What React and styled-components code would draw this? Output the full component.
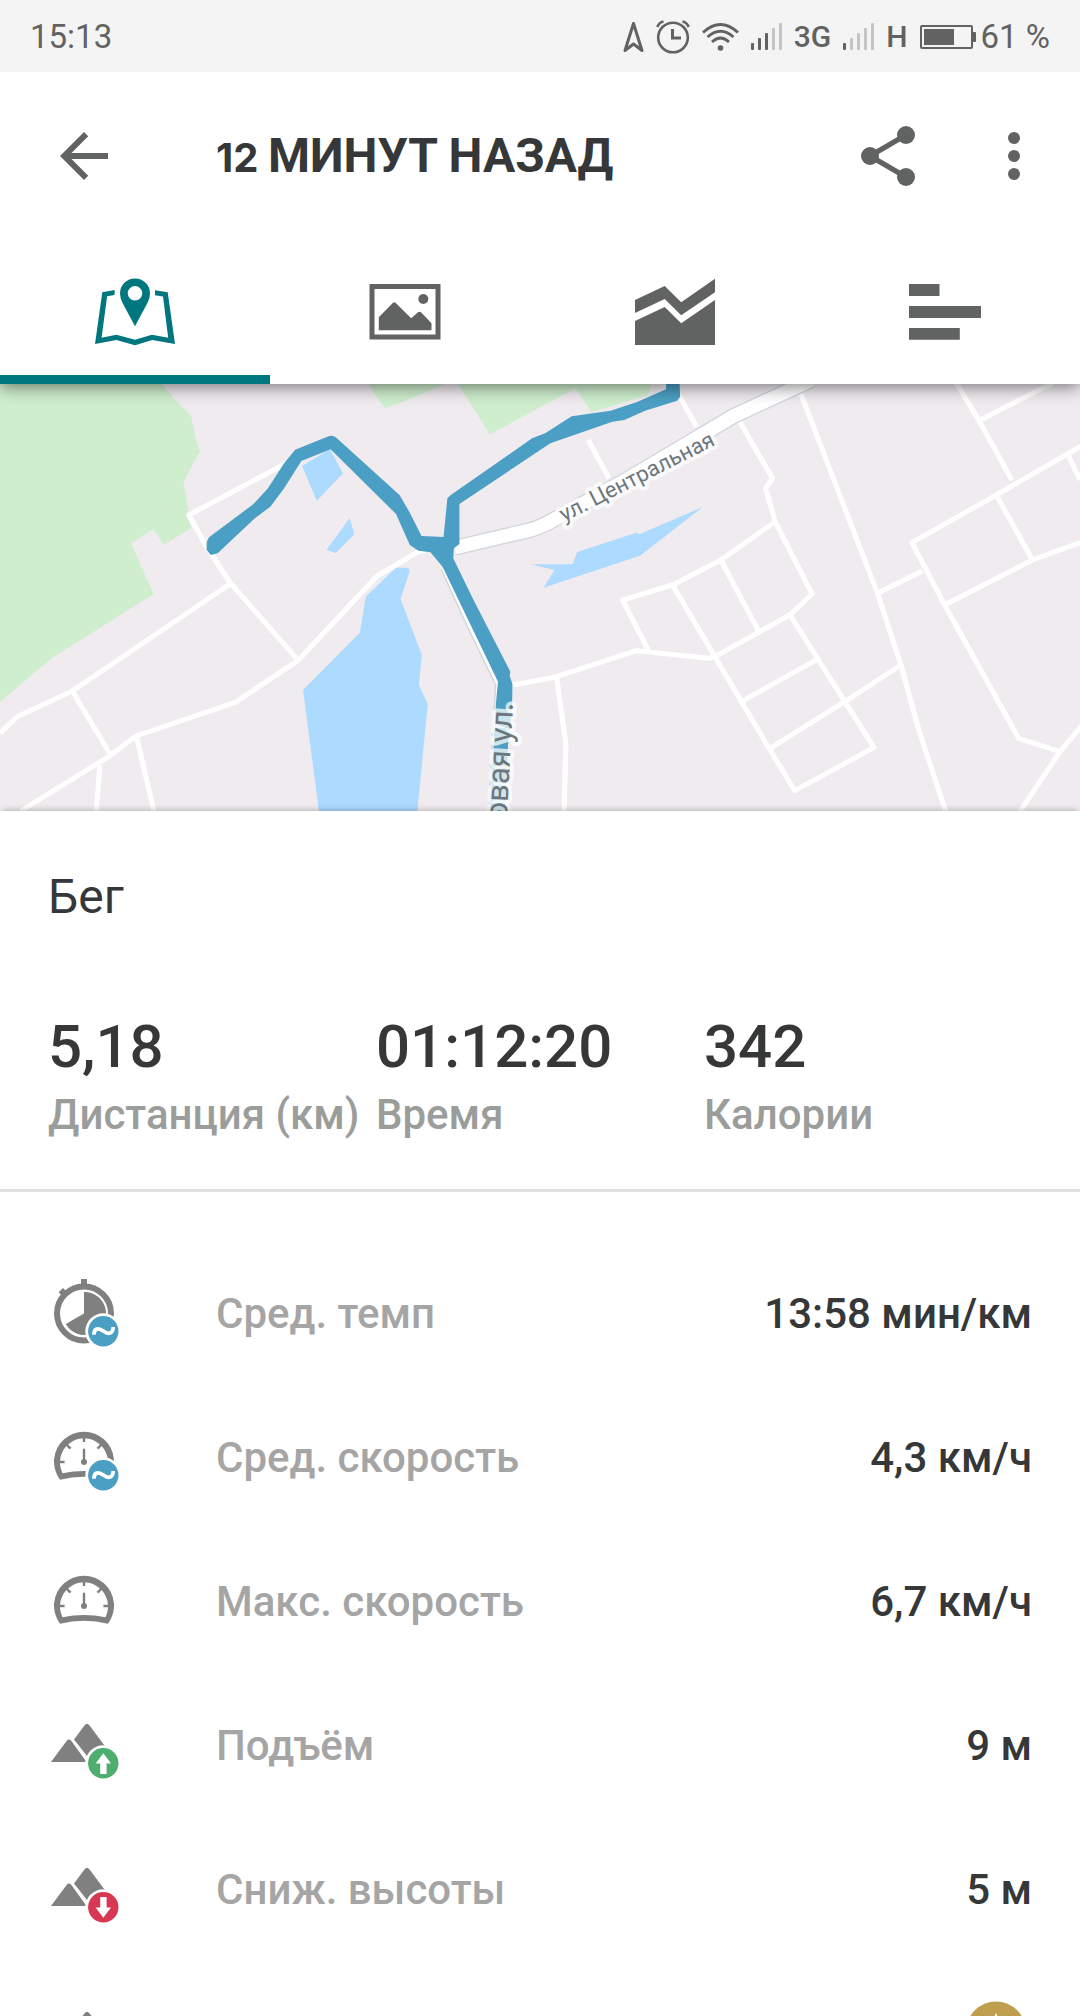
import React from "react";
import styled, { createGlobalStyle } from "styled-components";

const GlobalStyle = createGlobalStyle`
  * { box-sizing: border-box; }
  body {
    margin: 0;
    background: #fff;
    color: #363738;
    font-family: Roboto, "Noto Sans", sans-serif;
  }
`;

const Screen = styled.div`
  height: 100vh;
  overflow: hidden;
  background: #fff;
`;

const StatusBar = styled.div`
  position: relative;
  z-index: 2;
  display: flex;
  align-items: center;
  justify-content: space-between;
  height: 72px;
  padding: 1px 30px 0;
  background: #f4f4f4;
  color: #626262;
  font-size: 33px;
  line-height: 40px;
`;

const StatusIcons = styled.div`
  display: flex;
  align-items: center;
  gap: 12px;
`;

const BatteryLevel = styled.div`
  display: flex;
  align-items: center;
  gap: 5px;
`;

const NetworkType = styled.span`
  font-size: 30px;
  font-weight: 500;
`;

const Icon = styled.svg`
  display: block;
  flex: none;
  fill: currentColor;
`;

const Header = styled.header`
  position: relative;
  z-index: 1;
  background: #fff;
  box-shadow: 0 3px 16px rgba(0, 0, 0, 0.5);
`;

const AppBar = styled.div`
  display: flex;
  align-items: center;
  height: 168px;
  padding: 0 30px 0 48px;
`;

const IconButton = styled.button`
  display: block;
  flex: none;
  padding: 0;
  border: 0;
  background: none;
  color: #616362;
  cursor: pointer;
`;

const Title = styled.h1`
  flex: 1;
  margin: 0 0 0 96px;
  padding-top: 2px;
  font-size: 48px;
  line-height: 56px;
  font-weight: 700;
  white-space: nowrap;
`;

const TitleNumber = styled.span`
  font-family: Inter, Roboto, sans-serif;
  font-size: 40px;
`;

const Actions = styled.div`
  display: flex;
  gap: 54px;
`;

const Tabs = styled.nav`
  display: grid;
  grid-template-columns: repeat(4, 1fr);
  height: 144px;
`;

const Tab = styled.button`
  display: flex;
  align-items: center;
  justify-content: center;
  padding: 9px 0 0;
  border: 0;
  border-bottom: 9px solid ${(p) => (p.$active ? "#00767f" : "transparent")};
  background: none;
  color: ${(p) => (p.$active ? "#00767f" : "#616362")};
  cursor: pointer;
`;

const MapArea = styled.svg`
  display: block;
  width: 100%;
  height: 427px;
  background: #efebef;
`;

const StreetName = styled.text`
  font-size: ${(p) => p.$size}px;
  fill: #6c777d;
  stroke: rgba(255, 255, 255, 0.72);
  stroke-width: 8px;
  stroke-linejoin: round;
  paint-order: stroke;
`;

const Summary = styled.section`
  position: relative;
  padding: 58px 48px 49px;
  border-bottom: 3px solid #e0e0e0;
  background: #fff;
  box-shadow: 0 -4px 6px -3px rgba(0, 0, 0, 0.25);
`;

const Activity = styled.h2`
  margin: 0 0 86px;
  font-size: 48px;
  line-height: 56px;
  font-weight: 400;
`;

const Stats = styled.dl`
  display: grid;
  grid-template-columns: repeat(3, 1fr);
  margin: 0;
`;

const Stat = styled.div`
  display: flex;
  flex-direction: column-reverse;
  gap: 7px;
`;

const StatValue = styled.dd`
  margin: 0;
  font-size: 60px;
  line-height: 72px;
  font-weight: 500;
`;

const StatLabel = styled.dt`
  color: #9b9d9b;
  font-size: 42px;
  line-height: 50px;
  font-weight: 500;
  white-space: nowrap;
`;

const Details = styled.dl`
  margin: 0;
  padding: 50px 48px 0;
`;

const Row = styled.div`
  display: flex;
  align-items: center;
  height: 144px;
  font-size: 42px;
  line-height: 50px;
  font-weight: 500;
`;

const RowLabel = styled.dt`
  display: flex;
  flex: 1;
  align-items: center;
  gap: 96px;
  color: #a5a5a5;
`;

const RowValue = styled.dd`
  margin: 0;
`;

const RowIcon = styled(Icon)`
  color: #808080;
`;

function Signal({ level }) {
  const tops = [20, 15, 10, 5, 0];
  return (
    <Icon width="31" height="27" aria-hidden="true">
      {tops.map((top, i) => (
        <rect key={top} x={i * 7} y={top} width="3" height={27 - top} rx="1" fill={i < level ? "#626262" : "#c4c4c4"} />
      ))}
    </Icon>
  );
}

function Badge({ kind }) {
  const colors = { average: "#4c9fc4", up: "#4fad6d", down: "#d73753" };
  return (
    <g>
      <circle cx="55.3" cy="53.3" r="18" fill="#fff" />
      <circle cx="55.3" cy="53.3" r="15.2" fill={colors[kind]} />
      {kind === "average" && (
        <path d="M45.9 56.8C46 50.5 50 49.2 55.3 53S64.8 56 65.2 49" fill="none" stroke="#fff" strokeWidth="3.8" />
      )}
      {kind === "up" && <path d="M55.3 43.2L63 53.4H58.6V64H52.2V53.4H47.6Z" fill="#fff" />}
      {kind === "down" && <path d="M55.3 63.8L47.6 53.6H52.2V43H58.6V53.6H63Z" fill="#fff" />}
    </g>
  );
}

function Stopwatch() {
  return (
    <g>
      <circle cx="36" cy="35.5" r="27" fill="none" stroke="currentColor" strokeWidth="6" />
      <path d="M33 1h6v7h-6zM10.6 14.3L15 10l3.6 3.6-4.4 4.4z" />
      <path d="M36 35.5V14A21.5 21.5 0 1 1 17.8 46Z" />
    </g>
  );
}

function Gauge() {
  return (
    <g>
      <path
        fillRule="evenodd"
        d="M12 57.7A30 30 0 1 1 60 57.7Q36 52 12 57.7ZM14.6 51.2A24 24 0 1 1 57.4 51.2Q36 46.8 14.6 51.2Z"
      />
      <path
        d="M36 15v5M11 40h5.6M61 40h-5.6M18.6 22.6l4 4M53.4 22.6l-4 4M36 26.7V40"
        fill="none"
        stroke="currentColor"
        strokeWidth="2.4"
      />
      <circle cx="36" cy="40" r="3" />
    </g>
  );
}

function Mountains() {
  return (
    <path d="M3 52L18.8 30.7Q21 28.2 23.2 30.7L38.6 52ZM26 29.6L36.6 15.2Q39 12.2 41.4 15.2L58 37.5V46H39Z" />
  );
}

const glyphs = { stopwatch: Stopwatch, gauge: Gauge, mountains: Mountains };

const details = [
  { glyph: "stopwatch", badge: "average", label: "Сред. темп", value: "13:58 мин/км" },
  { glyph: "gauge", badge: "average", label: "Сред. скорость", value: "4,3 км/ч" },
  { glyph: "gauge", label: "Макс. скорость", value: "6,7 км/ч" },
  { glyph: "mountains", badge: "up", label: "Подъём", value: "9 м" },
  { glyph: "mountains", badge: "down", label: "Сниж. высоты", value: "5 м" },
];

const stats = [
  { label: "Дистанция (км)", value: "5,18" },
  { label: "Время", value: "01:12:20" },
  { label: "Калории", value: "342" },
];

function DetailIcon({ glyph, badge }) {
  const Glyph = glyphs[glyph];
  return (
    <RowIcon width="72" height="72" viewBox="0 0 72 72" aria-hidden="true">
      <Glyph />
      {badge && <Badge kind={badge} />}
    </RowIcon>
  );
}

function RouteMap() {
  return (
    <MapArea viewBox="0 0 1080 427" preserveAspectRatio="xMidYMid slice" role="img" aria-label="Маршрут">
      <g transform="scale(.34439 .33333) translate(0 -12)">
        <g fill="#ceeece">
          <path d="M0 12H470L500 50 555 108 570 185 581 212 533 305 548 400 555 445 475 495 446 447 380 490 446 642 150 835 0 965Z" />
          <path d="M1070 12L1100 60 1117 83 1170 66 1290 12Z" />
          <path d="M1330 12L1422 163 1568 82 1671 25 1718 97 1881 45 1893 12Z" />
        </g>
        <g fill="#addaff">
          <path d="M877 258L958 208 996 280 920 362Z" />
          <path d="M1015 415L1029 463 975 519 948 510Z" />
          <path d="M1150 563H1185L1190 572 1163 658 1225 825 1216 915 1242 972 1212 1293H926L880 930 1045 758 1062 650Z" />
          <path d="M1542 553H1663L1676 516 1848 458 1858 462 2041 381 1858 527 1578 623 1610 570Z" />
        </g>
        <g fill="none" stroke="#fff" strokeWidth="15" strokeLinejoin="round">
          <path d="M840 245L548 405 600 500 668 608 865 840" />
          <path d="M0 1060L50 1010 210 933 668 612M210 933L318 1120" />
          <path d="M60 1293L318 1128 395 1068 683 967 865 842 1095 588 1215 515 1260 505" />
          <path d="M290 1155L280 1293M397 1072L447 1293" />
        </g>
        <g transform="translate(1568 0)" fill="none" stroke="#fff" strokeWidth="15" strokeLinejoin="round">
          <path d="M-80 915L0 900 48 890 280 812 490 835 525 820 725 705 790 642 683 425 655 325 675 295 580 125" />
          <path d="M48 890L75 1090 70 1293" />
          <path d="M683 425L525 540 385 615 240 660 315 812" />
          <path d="M385 615L505 825 665 1105 740 1232 970 1102 885 965 728 708" />
          <path d="M525 540L633 750M585 965L805 838M668 1105L885 965 1048 855" />
          <path d="M757 40L980 640 1048 855 1100 1050 1180 1300M980 640L1110 573" />
          <path d="M1205 2L1275 122 1370 300M1275 122L1490 8" />
          <path d="M1580 193L1325 345 1080 488 1175 675 1390 1075 1510 1115" />
          <path d="M1325 345L1430 540M1175 675L1430 540 1575 485M1535 228L1568 300" />
          <path d="M1575 1035L1510 1115 1390 1300" />
          <path d="M140 180L200 295M400 40L455 140" />
        </g>
        <g fill="none" strokeLinejoin="round">
          <path d="M1320 503L1540 450Q1575 440 1620 412L1818 300 2132 107 2356 0" stroke="#d3d6dc" strokeWidth="48" />
          <path d="M1320 503L1540 450Q1575 440 1620 412L1818 300 2132 107 2356 0" stroke="#fff" strokeWidth="40" />
          <path d="M1300 560L1380 740 1460 910 1440 1293" stroke="#d3d6dc" strokeWidth="46" />
          <path d="M1300 560L1380 740 1460 910 1440 1293" stroke="#fff" strokeWidth="37" />
        </g>
        <path
          fill="#4c9fc4"
          d="M600 487L607 472 735 373 778 325 825 250 857 209 956 168Q968 165 975 172L1160 345 1190 398 1224 468 1288 471 1299 355 1308 346 1545 175 1583 160 1660 109 1773 92 1850 66 1934 28V0H1973L1975 50 1966 62 1873 92 1813 120 1778 125 1598 190 1334 372V492L1318 505 1316 535 1375 660 1482 875 1480 888 1488 912 1487 975 1475 1095 1465 1293H1423L1440 970 1446 905 1285 560 1250 517 1215 512 1190 495 1150 402 960 208 875 243 825 325 785 380 740 415 632 520 612 525 600 510Z"
        />
      </g>
      <StreetName $size="22" transform="translate(564 138) rotate(-27)">ул. Центральная</StreetName>
      <StreetName $size="31" textAnchor="end" transform="translate(513 319) rotate(-87)">овая ул.</StreetName>
    </MapArea>
  );
}

export default function App() {
  return (
    <Screen>
      <GlobalStyle />
      <StatusBar>
        <span>15:13</span>
        <StatusIcons>
          <Icon width="21" height="32" viewBox="0 0 21 32" aria-hidden="true">
            <path d="M10.5 2.5L2 29.5 10.5 23 19 29.5Z" fill="none" stroke="currentColor" strokeWidth="3" strokeLinejoin="round" />
          </Icon>
          <Icon width="34" height="34" viewBox="0 0 34 34" aria-hidden="true">
            <g fill="none" stroke="currentColor">
              <circle cx="17" cy="17.5" r="14.8" strokeWidth="2.6" />
              <path d="M16.5 9v9H25" strokeWidth="3" />
              <path d="M1.3 7Q3 2.5 7.5 1.5M32.7 7Q31 2.5 26.5 1.5" strokeWidth="2.6" />
            </g>
          </Icon>
          <Icon width="37" height="28" viewBox="0 0 37 28" aria-hidden="true">
            <g fill="none" stroke="currentColor" strokeWidth="2.8">
              <path d="M1 9.5Q18.5-6.5 36 9.5M5.5 14Q18.5 2.5 31.5 14M10 19Q18.5 11 27 19" />
            </g>
            <circle cx="18.5" cy="25" r="2.8" />
          </Icon>
          <Signal level={3} />
          <NetworkType>3G</NetworkType>
          <Signal level={1} />
          <NetworkType>H</NetworkType>
          <BatteryLevel>
            <Icon width="56" height="24" viewBox="0 0 56 24" aria-hidden="true">
              <rect x="1" y="1" width="51" height="22" rx="1" fill="none" stroke="currentColor" strokeWidth="2" />
              <rect x="4" y="4" width="30" height="16" />
              <rect x="52" y="7" width="4" height="10" rx="1" />
            </Icon>
            <span>61 %</span>
          </BatteryLevel>
        </StatusIcons>
      </StatusBar>

      <Header>
        <AppBar>
          <IconButton aria-label="Назад">
            <Icon width="72" height="72" viewBox="0 0 24 24">
              <path d="M20 11H7.83l5.59-5.59L12 4l-8 8 8 8 1.41-1.41L7.83 13H20v-2z" />
            </Icon>
          </IconButton>
          <Title>
            <TitleNumber>12 </TitleNumber>МИНУТ НАЗАД
          </Title>
          <Actions>
            <IconButton aria-label="Поделиться">
              <Icon width="72" height="72" viewBox="0 0 24 24">
                <path d="M18 5L6 12l12 7" fill="none" stroke="currentColor" strokeWidth="1.8" />
                <circle cx="18" cy="5" r="3" />
                <circle cx="6" cy="12" r="3" />
                <circle cx="18" cy="19" r="3" />
              </Icon>
            </IconButton>
            <IconButton aria-label="Ещё">
              <Icon width="72" height="72" viewBox="0 0 24 24">
                <circle cx="12" cy="6" r="2" />
                <circle cx="12" cy="12" r="2" />
                <circle cx="12" cy="18" r="2" />
              </Icon>
            </IconButton>
          </Actions>
        </AppBar>
        <Tabs>
          <Tab $active aria-label="Карта" aria-current="page">
            <Icon width="84" height="72" viewBox="0 0 84 72">
              <path d="M9.3 16.3L21.7 14 21.5 19 14.1 20.3 8.6 61.7 23.4 58.7 42 63.7 58.9 58.7 75.2 61.7 70 20.5 62 19.3V14.3L74.7 16.3 82 68 59.2 64 42 69.3 23.4 64 2 68Z" />
              <path
                fillRule="evenodd"
                d="M42 2.4A15 15 0 0 0 27 17.4Q27 21 29.3 26.5L42 50.3 54.7 26.5Q57 21 57 17.4A15 15 0 0 0 42 2.4ZM42 10A7.2 7.2 0 1 1 42 24.6A7.2 7.2 0 1 1 42 10Z"
              />
            </Icon>
          </Tab>
          <Tab aria-label="Фото">
            <Icon width="84" height="72" viewBox="0 0 84 72">
              <rect x="9" y="10.5" width="66" height="50.5" fill="none" stroke="currentColor" strokeWidth="5" />
              <path d="M15.8 41.3L29.8 27Q31.3 25.4 32.8 27L48.2 42.3 55 36.3Q56.5 35 58 36.3L68.5 47.3V54.3H15.8Z" />
              <circle cx="60.3" cy="23" r="5" />
            </Icon>
          </Tab>
          <Tab aria-label="Графики">
            <Icon width="84" height="72" viewBox="0 0 84 72">
              <path d="M2 24L31.7 10 48.2 26.3 82 2.7V16.3L48.2 39.3 31.7 23 2 37ZM2 45L31.7 31 48.2 47.3 82 24V69H2Z" />
            </Icon>
          </Tab>
          <Tab aria-label="Круги">
            <Icon width="84" height="72" viewBox="0 0 84 72">
              <path d="M6 8h30.5v12H6zM6 30h72v12H6zM6 52h50.8v11.7H6z" />
            </Icon>
          </Tab>
        </Tabs>
      </Header>

      <main>
        <RouteMap />
        <Summary>
          <Activity>Бег</Activity>
          <Stats>
            {stats.map((s) => (
              <Stat key={s.label}>
                <StatLabel>{s.label}</StatLabel>
                <StatValue>{s.value}</StatValue>
              </Stat>
            ))}
          </Stats>
        </Summary>
        <Details>
          {details.map((d) => (
            <Row key={d.label}>
              <RowLabel>
                <DetailIcon glyph={d.glyph} badge={d.badge} />
                {d.label}
              </RowLabel>
              <RowValue>{d.value}</RowValue>
            </Row>
          ))}
          <Row>
            <RowLabel>
              <DetailIcon glyph="mountains" />
            </RowLabel>
            <RowValue>
              <Icon width="72" height="66" viewBox="0 0 72 66" aria-hidden="true">
                <circle cx="36" cy="30.5" r="30" fill="#bf9e50" />
                <path d="M36 12L42 25 56 26 45 35 49 49 36 41 23 49 27 35 16 26 30 25Z" fill="#fff" />
              </Icon>
            </RowValue>
          </Row>
        </Details>
      </main>
    </Screen>
  );
}
